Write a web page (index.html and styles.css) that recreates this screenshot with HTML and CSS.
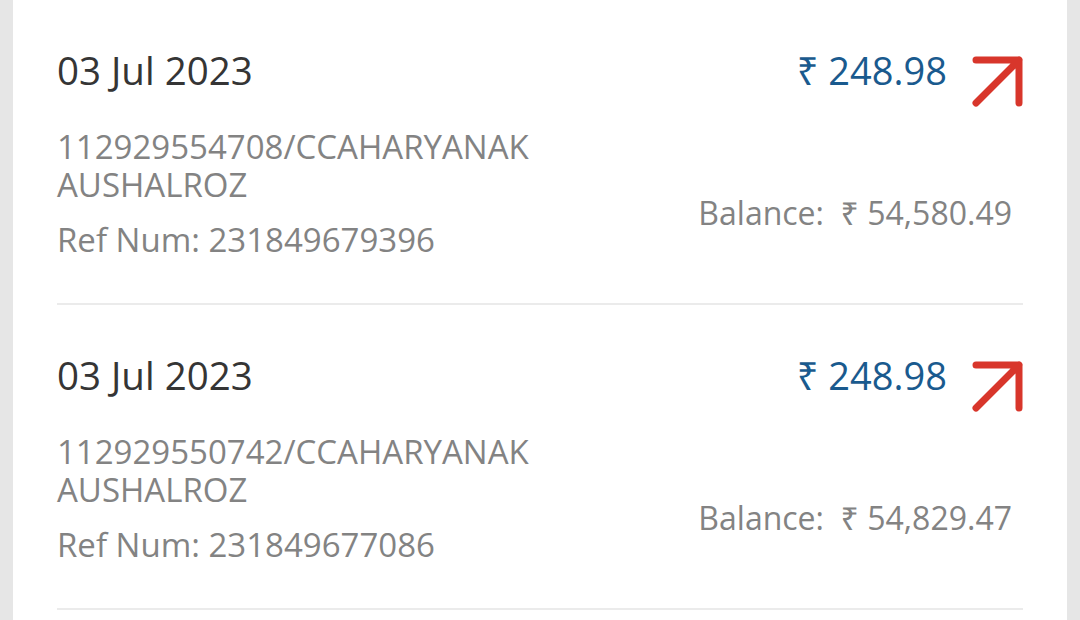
FILE: index.html
```html
<!DOCTYPE html>
<html lang="en">
<head>
    <meta charset="UTF-8">
    <meta name="viewport" content="width=device-width, initial-scale=1.0">
    <title>Transactions</title>
    <link rel="stylesheet" href="styles.css">
</head>
<body>

<div class="card">
    <div class="txn">
        <div class="txn-left">
            <div class="txn-date">03 Jul 2023</div>
            <div class="txn-desc">112929554708/CCAHARYANAKAUSHALROZ</div>
            <div class="txn-ref">Ref Num: 231849679396</div>
        </div>
        <div class="txn-right">
            <div class="amount-row">
                <span class="amount">₹ 248.98</span>
                <svg class="arrow" width="56" height="56" viewBox="0 0 56 56">
                    <path d="M6 50 L49 7 M6 7 H49 V50" fill="none" stroke="#d8362b" stroke-width="7" stroke-linecap="round" stroke-linejoin="round"/>
                </svg>
            </div>
            <div class="balance">Balance:&nbsp; ₹ 54,580.49</div>
        </div>
    </div>

    <div class="txn">
        <div class="txn-left">
            <div class="txn-date">03 Jul 2023</div>
            <div class="txn-desc">112929550742/CCAHARYANAKAUSHALROZ</div>
            <div class="txn-ref">Ref Num: 231849677086</div>
        </div>
        <div class="txn-right">
            <div class="amount-row">
                <span class="amount">₹ 248.98</span>
                <svg class="arrow" width="56" height="56" viewBox="0 0 56 56">
                    <path d="M6 50 L49 7 M6 7 H49 V50" fill="none" stroke="#d8362b" stroke-width="7" stroke-linecap="round" stroke-linejoin="round"/>
                </svg>
            </div>
            <div class="balance">Balance:&nbsp; ₹ 54,829.47</div>
        </div>
    </div>
</div>

</body>
</html>
```

FILE: styles.css
```css
body {
    font-family: "Open Sans", "Noto Sans", sans-serif;
    margin: 0;
    height: 100vh;
    overflow: hidden;
    background-color: #e6e6e6;
    color: #333;
}

.card {
    margin: 0 13px;
    min-height: 100vh;
    background-color: #fff;
    padding-top: 1px;
    margin-top: -1px;
}

.txn {
    display: flex;
    justify-content: space-between;
    margin: 0 44px;
    padding: 45px 0 44px;
    border-bottom: 2px solid #ebebeb;
}

.txn-date {
    font-size: 38.5px;
    line-height: 50px;
    color: #353535;
}

.txn-desc {
    width: 480px;
    margin-top: 33px;
    font-size: 33px;
    line-height: 38px;
    color: #838383;
    word-break: break-all;
}

.txn-ref {
    margin-top: 17px;
    font-size: 33px;
    line-height: 38px;
    color: #838383;
}

.txn-right {
    display: flex;
    flex-direction: column;
    align-items: flex-end;
}

.amount-row {
    display: flex;
    align-items: flex-start;
}

.amount {
    font-size: 38px;
    line-height: 50px;
    color: #1a5a8e;
}

.arrow {
    margin-left: 23px;
    margin-top: 8px;
    margin-right: -3px;
}

.balance {
    margin-top: 85px;
    margin-right: 11px;
    font-size: 32px;
    line-height: 38px;
    color: #838383;
}
```
